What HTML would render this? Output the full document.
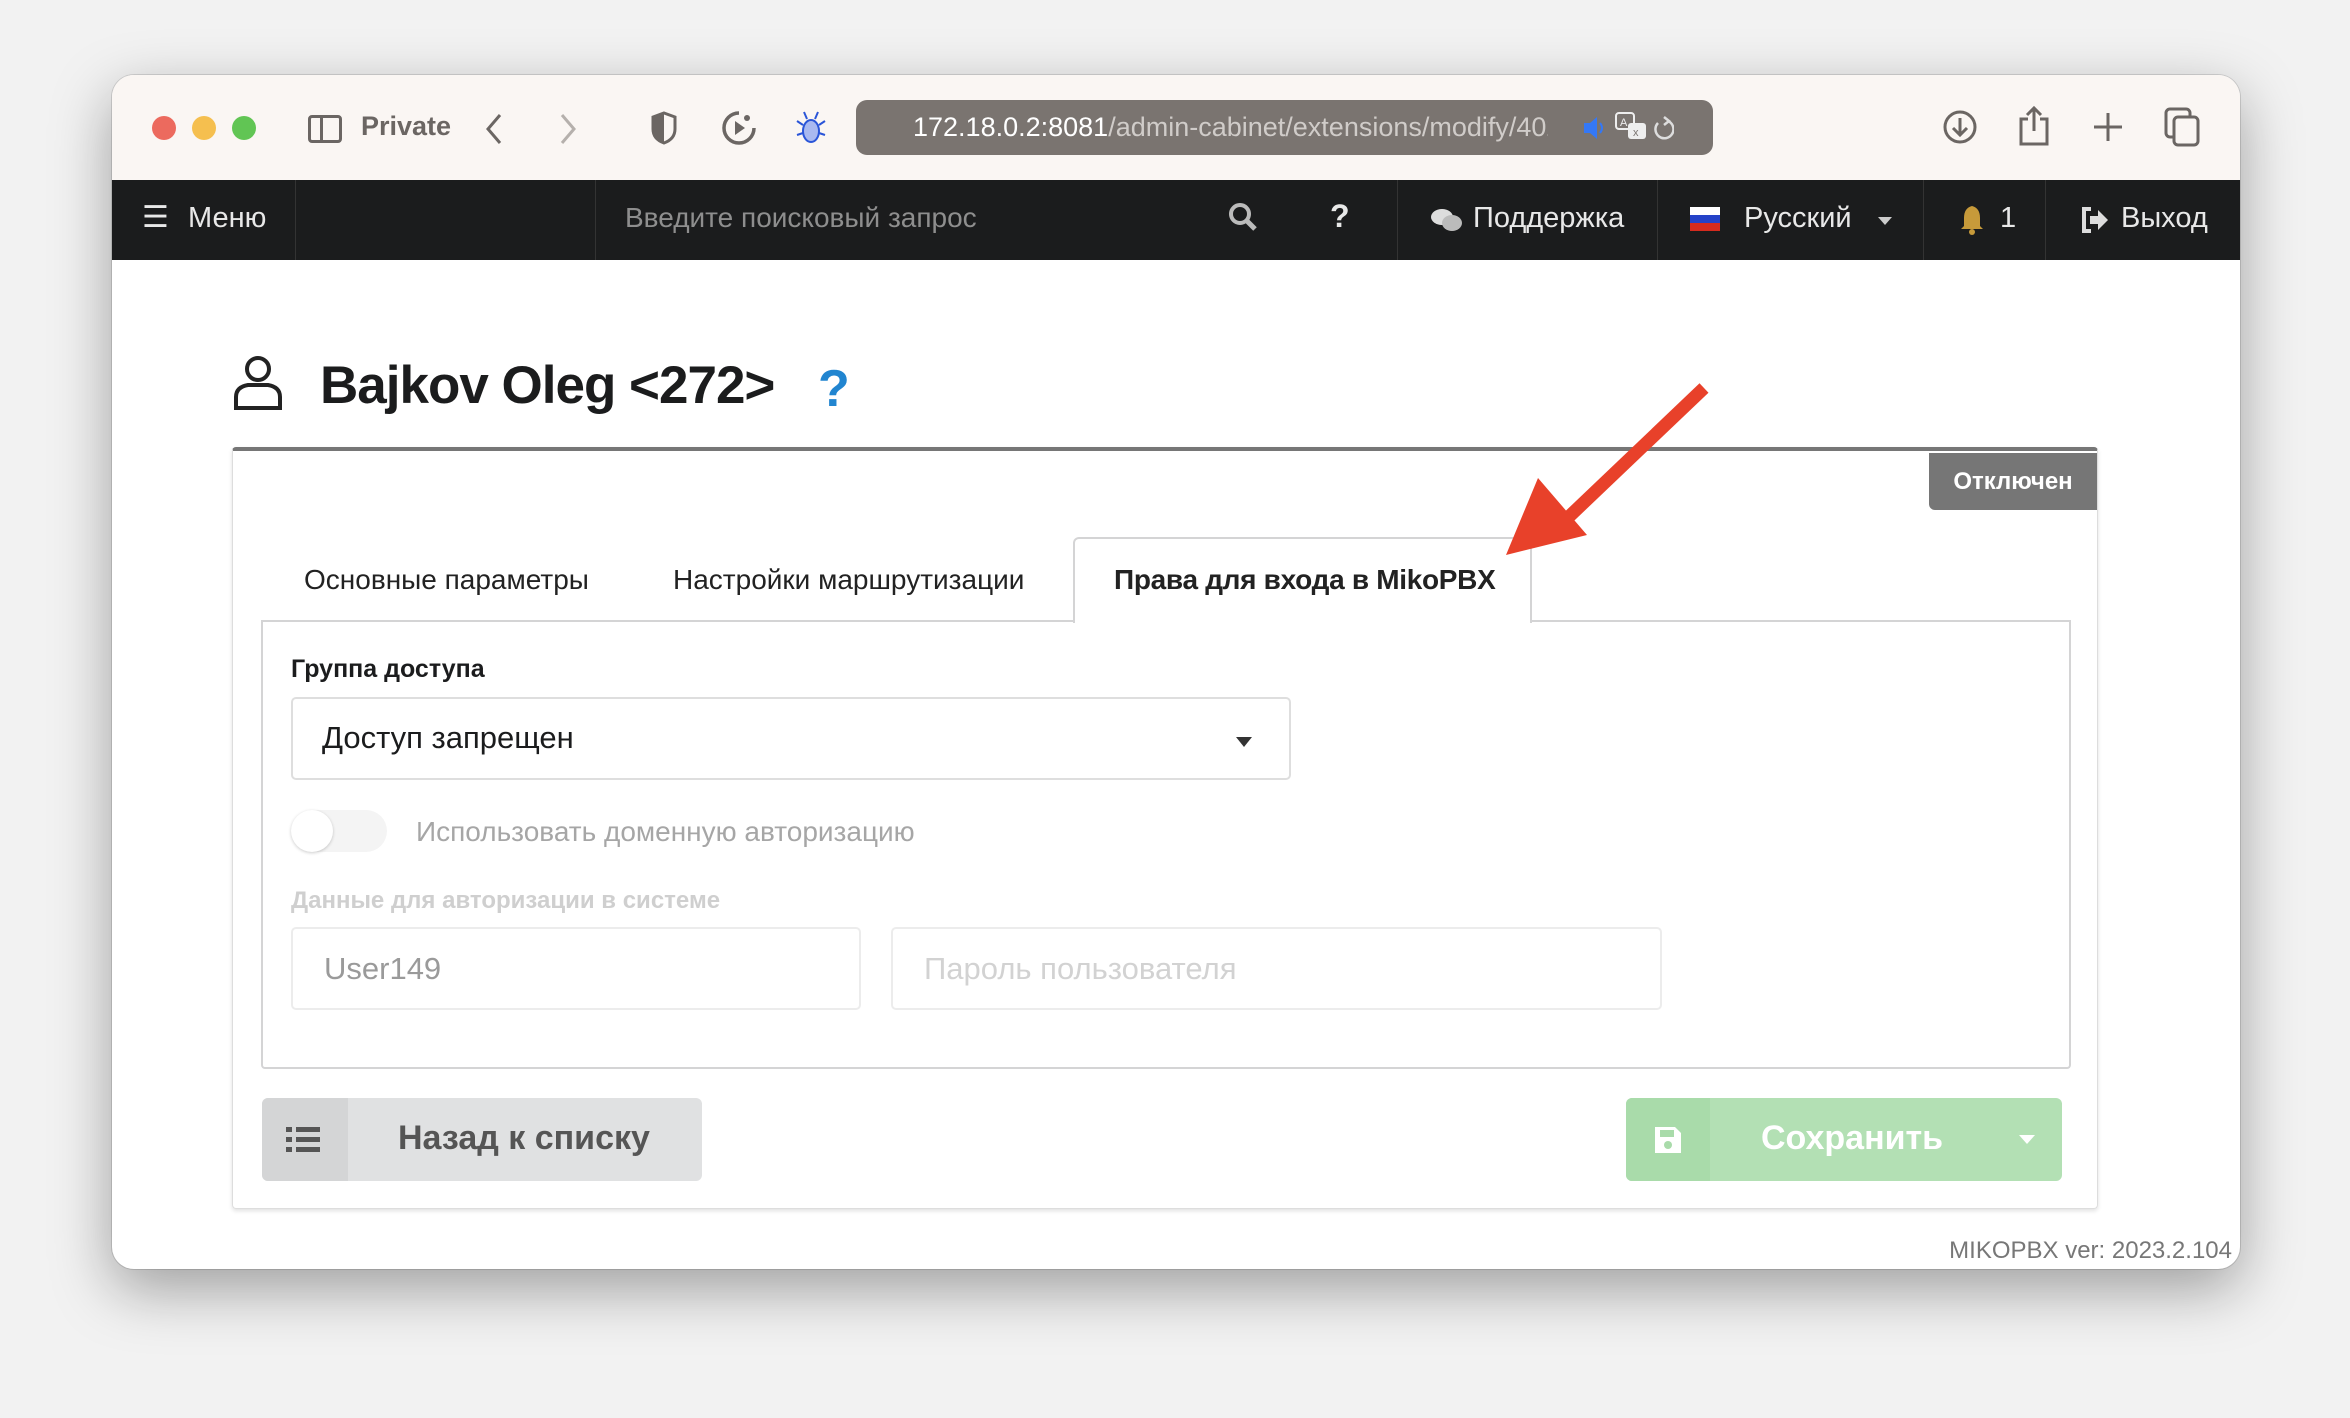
<!DOCTYPE html>
<html><head><meta charset="utf-8"><style>
*{box-sizing:border-box;margin:0;padding:0}
body{width:2350px;height:1418px;background:#f2f2f2;font-family:"Liberation Sans","Noto Sans CJK SC",sans-serif;position:relative;overflow:hidden}
.abs{position:absolute}
.win{left:112px;top:75px;width:2128px;height:1194px;border-radius:22px;background:#fff;overflow:hidden;box-shadow:0 20px 60px rgba(0,0,0,.35),0 0 0 1px rgba(0,0,0,.12)}
.tb{left:0;top:0;width:2128px;height:105px;background:#faf6f3}
.nav{left:0;top:105px;width:2128px;height:80px;background:#1b1c1d;color:#e8e8e8;font-size:29px}
.div{top:0;width:1px;height:80px;background:#333}
.navt{top:22px}
.tab{top:580px;font-size:28px;color:#222;transform:translateY(-50%)}
</style></head><body>
<div class="abs win">
 <div class="abs tb">
  <div class="abs" style="left:40px;top:41px;width:24px;height:24px;border-radius:50%;background:#ec6a5e"></div>
  <div class="abs" style="left:80px;top:41px;width:24px;height:24px;border-radius:50%;background:#f5bf4f"></div>
  <div class="abs" style="left:120px;top:41px;width:24px;height:24px;border-radius:50%;background:#61c554"></div>
  <div class="abs" style="left:196px;top:40px;width:34px;height:28px;border:3px solid #6b6663;border-radius:4px"><div style="position:absolute;left:9px;top:0;width:3px;height:22px;background:#6b6663"></div></div>
  <div class="abs" style="left:249px;top:36px;font-size:27px;font-weight:bold;color:#6b6663">Private</div>
  <svg class="abs" style="left:372px;top:38px" width="20" height="32"><path d="M16 2 L4 16 L16 30" stroke="#6b6663" stroke-width="3" fill="none"/></svg>
  <svg class="abs" style="left:446px;top:38px" width="20" height="32"><path d="M4 2 L16 16 L4 30" stroke="#b5b0ac" stroke-width="3" fill="none"/></svg>
  <svg class="abs" style="left:538px;top:36px" width="28" height="34"><path d="M14 2 L25 6 L25 18 Q25 28 14 32 Q3 28 3 18 L3 6 Z" stroke="#6b6663" stroke-width="3" fill="none"/><path d="M14 2 L3 6 L3 18 Q3 28 14 32Z" fill="#6b6663"/></svg>
  <svg class="abs" style="left:608px;top:34px" width="38" height="38"><path d="M19 4 A15 15 0 1 0 34 19" stroke="#6b6663" stroke-width="3.5" fill="none"/><path d="M15 12 L25 19 L15 26Z" fill="#6b6663"/><circle cx="27" cy="9" r="3" fill="#6b6663"/></svg>
  <svg class="abs" style="left:683px;top:34px" width="32" height="38"><ellipse cx="16" cy="22" rx="8" ry="11" fill="#a9b9f0" stroke="#2a55d8" stroke-width="2"/><path d="M8 16 L2 12 M24 16 L30 12 M8 24 L2 26 M24 24 L30 26 M12 10 L9 3 M20 10 L23 3" stroke="#2a55d8" stroke-width="2"/></svg>
  <div class="abs" style="left:744px;top:25px;width:857px;height:55px;background:#7a7470;border-radius:11px"></div>
  <div class="abs" style="left:801px;top:37px;font-size:27px;color:#d0ccc9;white-space:nowrap;width:635px;overflow:hidden"><span style="color:#fff">172.18.0.2:8081</span>/admin-cabinet/extensions/modify/402</div>
  <svg class="abs" style="left:1470px;top:40px" width="24" height="26"><path d="M2 8 H8 L15 2 V24 L8 18 H2Z" fill="#3478f6"/><path d="M18 8 Q22 13 18 18" stroke="#3478f6" stroke-width="2" fill="none"/></svg>
  <svg class="abs" style="left:1502px;top:36px" width="34" height="32"><rect x="2" y="2" width="18" height="16" rx="3" stroke="#eee" stroke-width="2" fill="none"/><rect x="14" y="12" width="18" height="16" rx="3" fill="#eee"/><text x="6" y="15" font-size="11" fill="#eee" font-family="Liberation Sans">A</text><text x="19" y="25" font-size="11" fill="#7a7470" font-family="Liberation Sans">x</text></svg>
  <svg class="abs" style="left:1540px;top:40px" width="22" height="28"><path d="M16 6 A9 9 0 1 1 6 8" stroke="#ddd" stroke-width="2.5" fill="none"/><path d="M12 2 L17 6 L12 10" stroke="#ddd" stroke-width="2.5" fill="none"/></svg>
  <svg class="abs" style="left:1830px;top:34px" width="36" height="36"><circle cx="18" cy="18" r="15" stroke="#6b6663" stroke-width="3" fill="none"/><path d="M18 9 V26 M11 19 L18 26 L25 19" stroke="#6b6663" stroke-width="3" fill="none"/></svg>
  <svg class="abs" style="left:1906px;top:30px" width="32" height="42"><path d="M10 14 H3 V39 H29 V14 H22 M16 26 V3 M9 10 L16 3 L23 10" stroke="#6b6663" stroke-width="3" fill="none"/></svg>
  <svg class="abs" style="left:1980px;top:36px" width="32" height="32"><path d="M16 2 V30 M2 16 H30" stroke="#6b6663" stroke-width="3"/></svg>
  <svg class="abs" style="left:2052px;top:32px" width="38" height="40"><rect x="2" y="2" width="24" height="28" rx="4" stroke="#6b6663" stroke-width="3" fill="none"/><rect x="10" y="10" width="24" height="28" rx="4" stroke="#6b6663" stroke-width="3" fill="#faf6f3"/></svg>
 </div>
 <div class="abs nav">
  <div class="abs navt" style="left:30px;top:20px;font-size:30px">☰</div>
  <div class="abs navt" style="left:76px">Меню</div>
  <div class="abs div" style="left:183px"></div>
  <div class="abs div" style="left:483px"></div>
  <div class="abs navt" style="left:513px;color:#8e8e8e;font-size:28px">Введите поисковый запрос</div>
  <svg class="abs" style="left:1116px;top:22px" width="30" height="30"><circle cx="12" cy="12" r="9" stroke="#bbb" stroke-width="4" fill="none"/><path d="M19 19 L27 27" stroke="#bbb" stroke-width="5"/></svg>
  <div class="abs navt" style="left:1218px;font-weight:bold;font-size:32px;top:18px">?</div>
  <div class="abs div" style="left:1285px"></div>
  <svg class="abs" style="left:1318px;top:27px" width="34" height="28"><ellipse cx="12" cy="10" rx="11" ry="8" fill="#ddd"/><ellipse cx="22" cy="16" rx="10" ry="8" fill="#bbb"/></svg>
  <div class="abs navt" style="left:1361px">Поддержка</div>
  <div class="abs div" style="left:1545px"></div>
  <div class="abs" style="left:1578px;top:27px;width:30px;height:24px;background:linear-gradient(#fff 33%,#2442c8 33%,#2442c8 66%,#d52b1e 66%)"></div>
  <div class="abs navt" style="left:1632px">Русский</div>
  <div class="abs" style="left:1766px;top:37px;border:7px solid transparent;border-top:8px solid #ccc"></div>
  <div class="abs div" style="left:1811px"></div>
  <svg class="abs" style="left:1848px;top:24px" width="24" height="32"><path d="M12 2 Q4 4 4 14 V22 L1 25 H23 L20 22 V14 Q20 4 12 2Z" fill="#c79a3a"/><circle cx="12" cy="28" r="3" fill="#c79a3a"/></svg>
  <div class="abs navt" style="left:1888px">1</div>
  <div class="abs div" style="left:1933px"></div>
  <svg class="abs" style="left:1968px;top:26px" width="30" height="28"><path d="M11 3 H4 V25 H11" stroke="#ddd" stroke-width="4" fill="none"/><path d="M10 10 H18 V4 L28 14 L18 24 V18 H10Z" fill="#ddd"/></svg>
  <div class="abs navt" style="left:2009px">Выход</div>
 </div>
 <!-- content -->
 <svg class="abs" style="left:120px;top:280px" width="52" height="56"><circle cx="26" cy="14" r="11" stroke="#222" stroke-width="4" fill="none"/><path d="M4 53 V42 Q4 32 16 30 H36 Q48 32 48 42 V53 Z" stroke="#222" stroke-width="4" fill="none"/></svg>
 <div class="abs" style="left:208px;top:280px;font-size:53px;font-weight:bold;color:#1b1c1d;letter-spacing:-1px">Bajkov Oleg &lt;272&gt;</div>
 <div class="abs" style="left:706px;top:284px;font-size:52px;font-weight:bold;color:#2185d0">?</div>
 <div class="abs" style="left:120px;top:372px;width:1866px;height:762px;border:1px solid #ddd;border-top:4px solid #767676;border-radius:4px;box-shadow:0 2px 4px rgba(0,0,0,.12)"></div>
 <div class="abs" style="left:1817px;top:378px;width:168px;height:57px;background:#767676;border-radius:0 0 0 6px;color:#fff;font-weight:bold;font-size:24px;text-align:center;line-height:57px">Отключен</div>
 <div class="abs" style="left:149px;top:545px;height:2px;background:#d4d4d5;width:1810px"></div>
 <div class="abs" style="left:149px;top:545px;width:1810px;height:524px;border:2px solid #d4d4d5;border-top:none;border-radius:0 0 4px 4px;height:449px"></div>
 <div class="abs" style="left:961px;top:462px;width:459px;height:86px;background:#fff;border:2px solid #d4d4d5;border-bottom:none;border-radius:6px 6px 0 0"></div>
 <div class="abs tab" style="left:192px;top:505px">Основные параметры</div>
 <div class="abs tab" style="left:561px;top:505px">Настройки маршрутизации</div>
 <div class="abs tab" style="left:1002px;top:505px;font-weight:bold;letter-spacing:-0.3px">Права для входа в MikoPBX</div>
 <div class="abs" style="left:179px;top:580px;font-size:25px;font-weight:bold;color:#1b1c1d">Группа доступа</div>
 <div class="abs" style="left:179px;top:622px;width:1000px;height:83px;border:2px solid #dedede;border-radius:5px"></div>
 <div class="abs" style="left:210px;top:645px;font-size:31px;color:#1b1c1d">Доступ запрещен</div>
 <div class="abs" style="left:1124px;top:662px;border:8px solid transparent;border-top:10px solid #333"></div>
 <div class="abs" style="left:179px;top:735px;width:96px;height:42px;border-radius:21px;background:#f4f4f4"></div>
 <div class="abs" style="left:179px;top:735px;width:42px;height:42px;border-radius:50%;background:#fff;box-shadow:0 1px 3px rgba(0,0,0,.2)"></div>
 <div class="abs" style="left:304px;top:741px;font-size:28px;color:#a6a6a6">Использовать доменную авторизацию</div>
 <div class="abs" style="left:179px;top:812px;font-size:24px;font-weight:bold;color:#cfcfcf">Данные для авторизации в системе</div>
 <div class="abs" style="left:179px;top:852px;width:570px;height:83px;border:2px solid #ececec;border-radius:5px"></div>
 <div class="abs" style="left:212px;top:876px;font-size:31px;color:#9a9a9a">User149</div>
 <div class="abs" style="left:779px;top:852px;width:771px;height:83px;border:2px solid #ececec;border-radius:5px"></div>
 <div class="abs" style="left:812px;top:876px;font-size:31px;color:#d2d2d2">Пароль пользователя</div>
 <div class="abs" style="left:150px;top:1023px;width:440px;height:83px;background:#e0e1e2;border-radius:6px;overflow:hidden"><div style="width:86px;height:83px;background:#d4d5d6"></div></div>
 <svg class="abs" style="left:174px;top:1051px" width="36" height="28"><g fill="#555"><rect x="0" y="1" width="6" height="5"/><rect x="10" y="1" width="24" height="5"/><rect x="0" y="11" width="6" height="5"/><rect x="10" y="11" width="24" height="5"/><rect x="0" y="21" width="6" height="5"/><rect x="10" y="21" width="24" height="5"/></g></svg>
 <div class="abs" style="left:286px;top:1044px;font-size:34px;font-weight:bold;color:#555">Назад к списку</div>
 <div class="abs" style="left:1514px;top:1023px;width:436px;height:83px;background:#b3e0b4;border-radius:6px;overflow:hidden"><div style="width:84px;height:83px;background:#a9dbaa"></div></div>
 <svg class="abs" style="left:1541px;top:1050px" width="30" height="30"><path d="M2 2 H22 L28 8 V28 H2Z" fill="#fff"/><rect x="7" y="5" width="14" height="7" fill="#a9dbaa"/><circle cx="15" cy="20" r="4" fill="#a9dbaa"/></svg>
 <div class="abs" style="left:1649px;top:1044px;font-size:34px;font-weight:bold;color:#fff">Сохранить</div>
 <div class="abs" style="left:1907px;top:1060px;border:8px solid transparent;border-top:9px solid #fff"></div>
 <div class="abs" style="left:1830px;top:1162px;font-size:24px;color:#777;width:290px;text-align:right">MIKOPBX ver: 2023.2.104</div>
</div>
<svg class="abs" style="left:0;top:0" width="2350" height="1418"><path d="M1704 388 L1555 530" stroke="#e8412a" stroke-width="13"/><path d="M1506 555 L1538 478 L1587 535Z" fill="#e8412a"/></svg>
</body></html>
